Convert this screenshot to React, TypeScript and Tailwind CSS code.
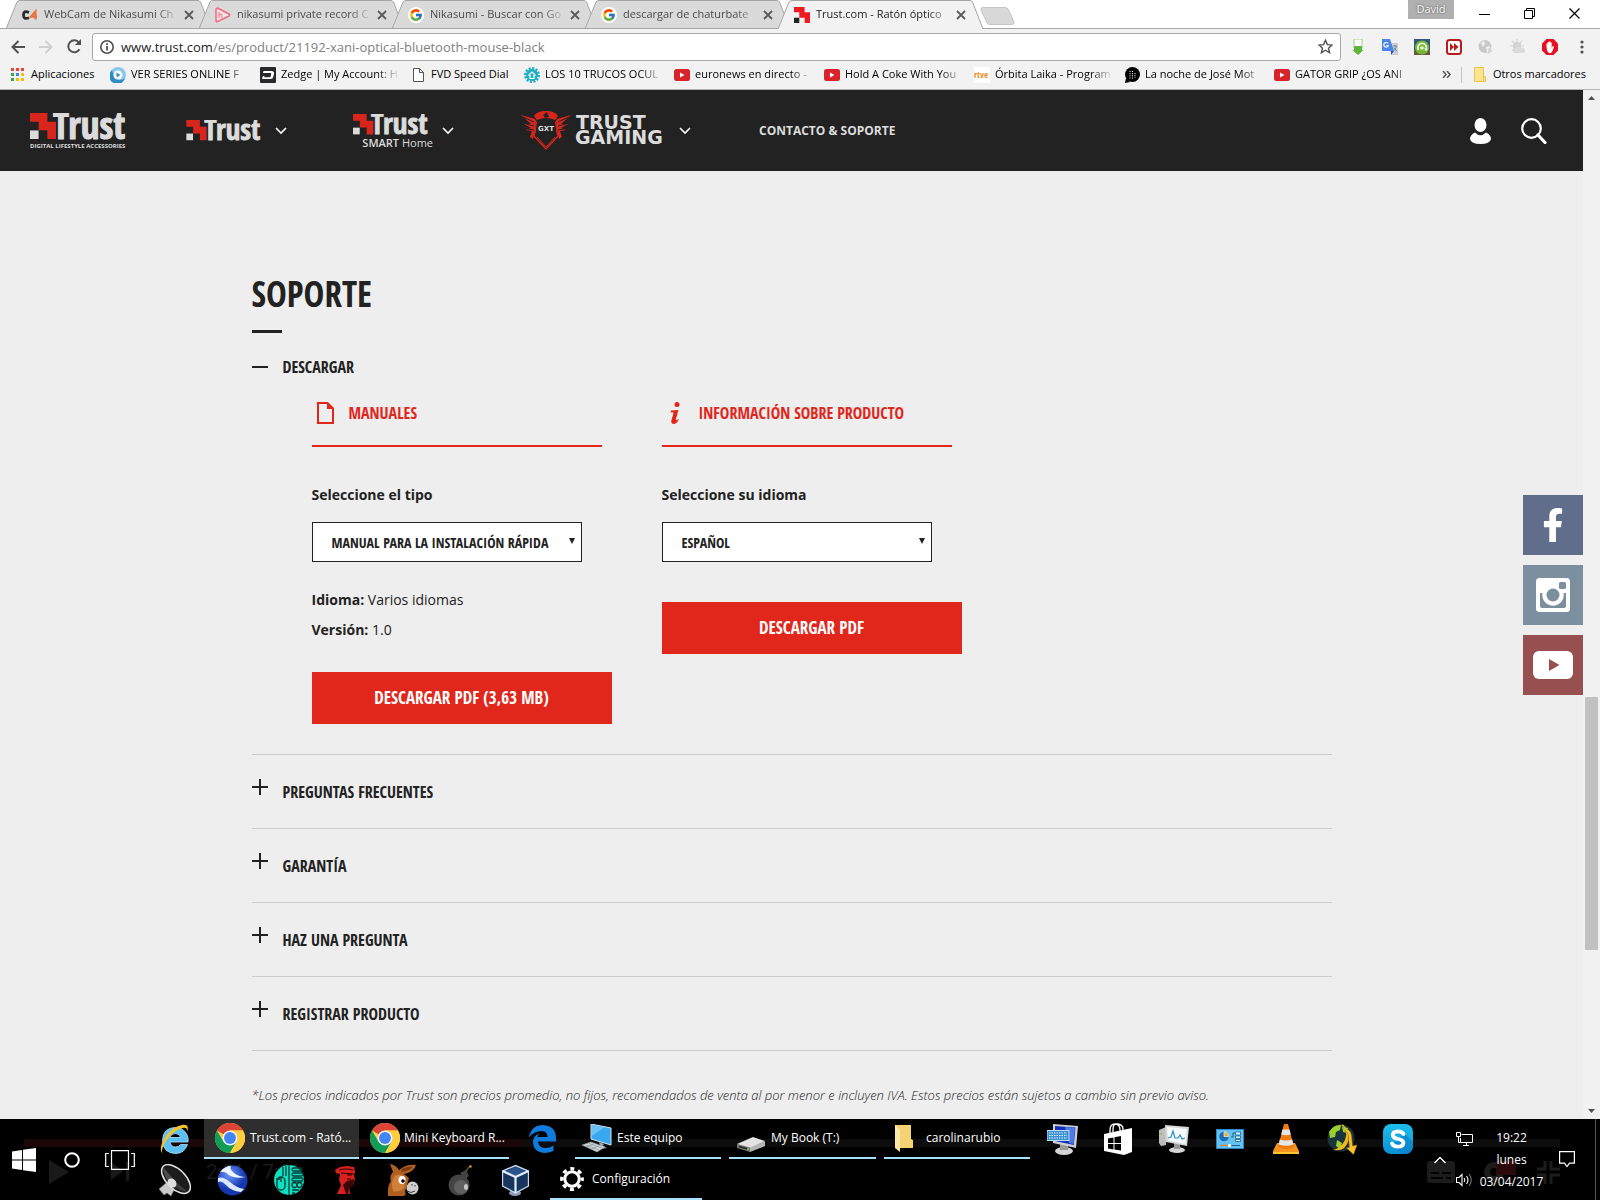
import React from "react";
import { FcGoogle } from "react-icons/fc";
import { FaFacebookF } from "react-icons/fa";

const CONDENSED = "font-['Open_Sans_Condensed','Roboto_Condensed',sans-serif] font-bold";

/* ---------- brand marks ---------- */

function TrustSteps({ light = "#dcdcdc" }: { light?: string }) {
  return (
    <>
      <path d="M0 0h17.4v8.7H26V26h-8.6v-8.7H8.7V8.7H0z" fill="#d9261c" />
      <path d="M0 17.4h8.6V26H0z" fill={light} />
    </>
  );
}

function TrustWord() {
  return (
    <text x="23" y="26" fontSize="37" fontWeight="700" fill="#dcdcdc" stroke="#dcdcdc" strokeWidth="1" fontFamily="'Open Sans Condensed', sans-serif">
      Trust
    </text>
  );
}

function TrustLogoLarge() {
  return (
    <svg width="103" height="36" viewBox="0 0 103 36" role="img" aria-label="Trust Digital Lifestyle Accessories">
      <TrustSteps />
      <TrustWord />
      <text x="0" y="35" fontSize="6" fontWeight="700" fill="#dcdcdc" fontFamily="'Open Sans', sans-serif">
        DIGITAL LIFESTYLE ACCESSORIES
      </text>
    </svg>
  );
}

function TrustLogoSmall() {
  return (
    <svg width="80" height="21" viewBox="0 0 102 27" role="img" aria-label="Trust">
      <TrustSteps />
      <TrustWord />
    </svg>
  );
}

function SmartHomeLogo() {
  return (
    <svg width="80" height="34" viewBox="0 0 80 34" role="img" aria-label="Trust Smart Home">
      <g transform="scale(0.784)">
        <TrustSteps />
        <TrustWord />
      </g>
      <text x="80" y="33" textAnchor="end" fontSize="11" fill="#dcdcdc" fontFamily="'Open Sans', sans-serif">
        <tspan fontWeight="600">SMART</tspan> Home
      </text>
    </svg>
  );
}

function GamingLogo() {
  return (
    <svg width="149" height="40" viewBox="0 0 149 40" role="img" aria-label="Trust Gaming">
      <g fill="none" stroke="#d9261c">
        <path d="M14 9 L16 13 L13 25 L25 38 L37 25 L34 13 L36 9" strokeWidth="1.4" />
        <path d="M16 26 L25 36 L34 26" strokeWidth="1" />
      </g>
      <path d="M13 5 Q16 0 25 0 Q34 0 37 5 L34 9 Q25 5 16 9z" fill="#d9261c" />
      <path d="M22 4l4-3 2 5-4 1z" fill="#222" />
      <path d="M0 4 L14 8 L15 14 L12 28 L9 26 L11 20 L5 19 L10 17 L3 13 L10 13z" fill="#d9261c" />
      <path d="M50 4 L36 8 L35 14 L38 28 L41 26 L39 20 L45 19 L40 17 L47 13 L40 13z" fill="#d9261c" />
      <path d="M2 6l11 5M5 13l8 2M7 18l6 1M48 6l-11 5M45 13l-8 2M43 18l-6 1" stroke="#222" strokeWidth="1" />
      <path d="M16 12h18l1 6-1 5H16l-1-5z" fill="#222" />
      <text x="25" y="20" textAnchor="middle" fontSize="7" fontWeight="700" fill="#dcdcdc" fontFamily="'DejaVu Sans', sans-serif">
        GXT
      </text>
      <g fill="#dcdcdc" fontFamily="'DejaVu Sans', sans-serif" fontSize="19" fontWeight="700">
        <text x="55" y="18">TRUST</text>
        <text x="54" y="33">GAMING</text>
      </g>
    </svg>
  );
}

function Chevron() {
  return (
    <svg width="12" height="8" viewBox="0 0 12 8" fill="none" stroke="#fff" strokeWidth="1.6">
      <path d="M1 1l5 5 5-5" />
    </svg>
  );
}

/* ---------- favicons (16 px) ---------- */

const svg16 = { width: 16, height: 16, viewBox: "0 0 16 16", className: "shrink-0" };

const TrustFavicon = () => (
  <svg {...svg16}>
    <path d="M0 0h10.600v5.300H16V16h-5.300v-5.300H5.300V5.300H0z" fill="#ed1c24" />
    <path d="M0 10.700h5.300V16H0z" fill="#222" />
  </svg>
);
const C4Icon = () => (
  <svg {...svg16} fill="none" strokeWidth="2.800">
    <path d="M7 5.500Q1.500 3 1.500 8T7 10.700" stroke="#2b2b2b" />
    <path d="M15 9.700H9L13.500 4.500V12.500" stroke="#e8743a" strokeWidth="2.200" />
  </svg>
);
const PlayH = () => (
  <svg {...svg16}>
    <path d="M2 1.500Q1 1 1 2.500v11q0 1.500 1.500 1l11.500-5.500q1.300-1 0-2L3 1.200z" fill="#fbe3e6" stroke="#ee6f80" strokeWidth="1.600" />
    <path d="M4 5v6M4 8q3-2 3 0v3" fill="none" stroke="#ee6f80" />
  </svg>
);
const GoogleFav = () => (
  <span className="flex size-4 shrink-0 items-center justify-center rounded-full bg-white">
    <FcGoogle size={14} />
  </span>
);
const AppsIcon = () => (
  <svg {...svg16} width="14" height="14" viewBox="0 0 14 14">
    {["#ea4335", "#ea4335", "#ea4335", "#34a853", "#4285f4", "#fbbc05", "#34a853", "#fbbc05", "#fbbc05"].map((c, i) => (
      <rect key={i} x={(i % 3) * 5} y={Math.floor(i / 3) * 5} width="3" height="3" fill={c} />
    ))}
  </svg>
);
const SeriesIcon = () => (
  <svg {...svg16}>
    <circle cx="8" cy="8" r="8" fill="#8cc8ea" />
    <path d="M2 3a8 8 0 1 0 13 8A7 7 0 0 1 4 9z" fill="#2f8dc6" />
    <circle cx="8" cy="8" r="4.500" fill="#fff" />
    <path d="M6.500 5.500v5L10.500 8z" fill="#2f8dc6" />
  </svg>
);
const ZedgeIcon = () => (
  <svg {...svg16}>
    <rect width="16" height="16" rx="1" fill="#29292d" />
    <path d="M3.500 4h8q3 0 2.500 2.500l-.6 3Q13 12 10.500 12H2l.9-3h1.600l-.3 1.200h5.300q1 0 1.200-.9l.5-2.300q.2-1-.8-1H3z" fill="#fff" />
  </svg>
);
const PageIcon = () => (
  <svg {...svg16} width="11" height="14" viewBox="0 0 11 14" fill="#fff" stroke="#555">
    <path d="M.5.5h6l4 4v9H.5zM6.500.5v4h4" />
  </svg>
);
const GearHome = () => (
  <svg {...svg16}>
    <circle cx="8" cy="8" r="6.700" fill="none" stroke="#1fafc6" strokeWidth="2.600" strokeDasharray="2.100 1.400" />
    <circle cx="8" cy="8" r="6" fill="#1fafc6" />
    <path d="M4.500 8.500L8 5l3.500 3.500M6 8v3.500h4V8" fill="none" stroke="#fff" strokeWidth="1.200" />
  </svg>
);
const YtFav = () => (
  <svg {...svg16}>
    <rect y="2" width="16" height="12" rx="2.500" fill="#d8232a" />
    <path d="M6 5.500v5L10.500 8z" fill="#fff" />
  </svg>
);
const RtveIcon = () => (
  <svg {...svg16}>
    <rect width="16" height="16" fill="#fff" />
    <text x="0" y="11" fontSize="9" fontWeight="700" fill="#f08c1e" fontFamily="'Open Sans Condensed', sans-serif">rtve</text>
  </svg>
);
const NocheIcon = () => (
  <svg {...svg16}>
    <circle cx="8.500" cy="7.500" r="7.500" fill="#000" />
    <path d="M1 16l1-5 4 4z" fill="#000" />
    <path d="M6 4v8M8.500 4v8M11 6v5" stroke="#fff" strokeWidth="1" strokeDasharray="1 1.200" />
  </svg>
);
const FolderFav = () => (
  <svg {...svg16} width="12" height="15" viewBox="0 0 12 15">
    <path d="M.5.5h9v9h2v5H.5z" fill="#ffe58f" stroke="#e8c14f" />
    <path d="M9.500 9.500v5" stroke="#e8c14f" />
  </svg>
);

/* ---------- browser chrome ---------- */

type TabProps = { icon: React.ReactNode; title: string; active?: boolean };

function BrowserTab({ icon, title, active }: TabProps) {
  const fill = active ? "#f2f2f2" : "#dadada";
  return (
    <div className={active ? "relative z-10 -mr-3 h-[29px] w-[205px]" : "relative -mr-3 h-[29px] w-[205px]"}>
      <svg className="absolute inset-0 h-full w-full" viewBox="0 0 205 29" preserveAspectRatio="none">
        <path d="M0 29L11 2Q12 .5 14 .5H192Q193.500.5 194.500 2L205 29" fill={fill} stroke="#a6a6a6" />
        {!active && <path d="M0 28.500h205" stroke="#a6a6a6" />}
      </svg>
      <div className="relative flex h-full items-center pl-4">
        {icon}
        <button
          className={`ml-[6px] w-[134px] text-left text-[11px] whitespace-nowrap [mask-image:linear-gradient(to_right,#000_112px,transparent_136px)] ${active ? "text-[#222]" : "text-[#4a4a4a]"}`}
        >
          {title}
        </button>
        <button aria-label="Cerrar pestaña" className="mr-[17px] ml-auto">
          <svg width="10" height="10" viewBox="0 0 10 10" stroke="#5a5a5a" strokeWidth="1.800">
            <path d="M1 1l8 8M9 1L1 9" />
          </svg>
        </button>
      </div>
    </div>
  );
}

function TabStrip() {
  return (
    <div className="flex h-[29px] items-start border-b border-[#a6a6a6] bg-white">
      <div className="flex pl-[6px]">
        <BrowserTab icon={<C4Icon />} title="WebCam de Nikasumi Ch" />
        <BrowserTab icon={<PlayH />} title="nikasumi private record C" />
        <BrowserTab icon={<GoogleFav />} title="Nikasumi - Buscar con Go" />
        <BrowserTab icon={<GoogleFav />} title="descargar de chaturbate" />
        <BrowserTab icon={<TrustFavicon />} title="Trust.com - Ratón óptico" active />
      </div>
      <button aria-label="Nueva pestaña" className="mt-[7px] ml-[9px]">
        <svg width="35" height="18" viewBox="0 0 35 18">
          <path d="M3 .5H25Q27 .5 28 2L34 15Q34.500 17.500 32 17.500H10Q8 17.500 7 16L1 3Q.5.5 3 .5z" fill="#d8d8d8" stroke="#c6c6c6" />
        </svg>
      </button>
      <div className="ml-auto flex items-start">
        <button className="mr-1 flex h-[19px] w-[46px] items-start justify-center bg-[#b0b0b0] text-[11px] leading-[17px] text-white [text-shadow:0_0_2px_#333]">David</button>
        <button aria-label="Minimizar" className="flex h-[27px] w-[52px] items-center justify-center">
          <svg width="11" height="10" stroke="#000"><path d="M0 5.500h11" /></svg>
        </button>
        <button aria-label="Restaurar" className="flex h-[27px] w-[38px] items-center justify-center">
          <svg width="11" height="11" fill="none" stroke="#000"><path d="M.5 2.500h8v8h-8zM2.500 2V.5h8v8H9" /></svg>
        </button>
        <button aria-label="Cerrar" className="flex h-[27px] w-[52px] items-center justify-center">
          <svg width="11" height="11" stroke="#000" strokeWidth="1.200"><path d="M.5.5l10 10M10.500.5l-10 10" /></svg>
        </button>
      </div>
    </div>
  );
}

const extensions: { name: string; art: React.ReactNode }[] = [
  { name: "Descargas", art: (<><path d="M4 0h8v9H4z" fill="#fff" stroke="#9bd27f" /><path d="M4 7h8v4h1.500L8 16l-5.500-5H4z" fill="#5fb53a" /></>) },
  { name: "Traductor", art: (<><path d="M6 4h10v12H9z" fill="#cfcfcf" /><path d="M0 0h8l4 12H1Q0 12 0 11z" fill="#4a86e8" /><path d="M9 12h3l-3 4z" fill="#2a56c6" /><path d="M6 4.500A2.300 2.300 0 1 0 6.300 6.500H4.500" fill="none" stroke="#fff" strokeWidth="1.200" /><path d="M11 7h4M13 6v1M14.500 7q-1 4-3 5M12 8.500q1 2.500 3 3.500" stroke="#5a7a9a" fill="none" strokeWidth=".8" /></>) },
  { name: "Recargar", art: (<><rect width="16" height="16" fill="#35577d" /><rect y="11" width="16" height="5" fill="#6a5a3a" /><circle cx="8" cy="8.500" r="7" fill="#74b737" /><path d="M4.500 11A4.300 4.300 0 1 1 12 10.500" fill="none" stroke="#e6f5d8" strokeWidth="1.800" /><path d="M10 9.500h4l-2 3z" fill="#e6f5d8" /><circle cx="8" cy="9" r="1.800" fill="#e6f5d8" /></>) },
  { name: "FVD", art: (<><rect x="1" y="1" width="14" height="14" rx="2.500" fill="#fff" stroke="#b81c1c" strokeWidth="2" /><path d="M4 4l4 4-4 4zM8 4l4.500 4L8 12z" fill="#b81c1c" /></>) },
  { name: "Mundo", art: (<><circle cx="7" cy="7.500" r="6.500" fill="#c9c9c9" /><path d="M3 4l3-2 1 3-2 3zM8 8l4-1-1 5-2 1z" fill="#f0f0f0" /><path d="M10 9l5 3-5 3z" fill="#d6d6d6" /></>) },
  { name: "Tiempo", art: (<><circle cx="7" cy="7" r="4" fill="#cfcfcf" /><path d="M7 0v14M0 7h14M2 2l10 10M12 2L2 12" stroke="#d4d4d4" strokeWidth="1.200" /><path d="M4 14a3 3 0 0 1 1-5 4 4 0 0 1 7 0 2.500 2.500 0 0 1 1 5z" fill="#dadada" /></>) },
  { name: "Bloqueador", art: (<><path d="M4.500 0h7L16 4.500v7L11.500 16h-7L0 11.500v-7z" fill="#e81123" /><path d="M4.500 8V4.500h1.300V8V3h1.300v5V2.500h1.300V8V3.500h1.300V9l1-2 1.300.5L10.500 12 9 14H7Q4.500 12 4.500 8z" fill="#fff" /></>) },
];

function Toolbar() {
  return (
    <div className="flex h-[34px] items-center bg-[#f2f2f2] pt-px pr-[10px] pl-[11px]">
      <button aria-label="Atrás" className="w-7">
        <svg width="14" height="14" viewBox="0 0 14 14" fill="none" stroke="#505050" strokeWidth="2"><path d="M7.500 1L1.500 7l6 6M1.500 7H14" /></svg>
      </button>
      <button aria-label="Adelante" className="w-7">
        <svg width="14" height="14" viewBox="0 0 14 14" fill="none" stroke="#d0d0d0" strokeWidth="2"><path d="M6.500 1l6 6-6 6M12.500 7H0" /></svg>
      </button>
      <button aria-label="Recargar" className="w-[25px]">
        <svg width="15" height="15" viewBox="0 0 15 15" fill="none" stroke="#505050" strokeWidth="2"><path d="M12.500 10.300A6 6 0 1 1 12 3.500" /><path d="M14 0v6H8z" fill="#505050" stroke="none" /></svg>
      </button>
      <div className="flex h-7 flex-1 items-center rounded-[3px] border border-[#a9a9a9] bg-white px-[7px]">
        <svg width="14" height="14" viewBox="0 0 14 14" fill="none" stroke="#505050" strokeWidth="1.600" className="shrink-0">
          <circle cx="7" cy="7" r="6.200" /><path d="M7 6v4.500M7 3.300v1.600" strokeWidth="1.800" />
        </svg>
        <a href="#url" className="ml-[7px] flex-1 text-[13px] leading-5 whitespace-nowrap text-[#222]">
          www.trust.com<span className="text-[#808080]">/es/product/21192-xani-optical-bluetooth-mouse-black</span>
        </a>
        <button aria-label="Añadir a marcadores">
          <svg width="15" height="15" viewBox="0 0 24 24" fill="none" stroke="#505050" strokeWidth="2.200"><path d="M12 2l3 7 7.500.6-5.700 5 1.800 7.400-6.600-4-6.600 4 1.800-7.400-5.700-5L9 9z" /></svg>
        </button>
      </div>
      <div className="ml-[9px] flex items-center gap-4">
        {extensions.map((e) => (
          <button key={e.name} aria-label={e.name}>
            <svg {...svg16}>{e.art}</svg>
          </button>
        ))}
        <button aria-label="Menú" className="flex w-4 justify-center">
          <svg width="4" height="16" fill="#505050"><circle cx="2" cy="3" r="1.600" /><circle cx="2" cy="8" r="1.600" /><circle cx="2" cy="13" r="1.600" /></svg>
        </button>
      </div>
    </div>
  );
}

function Bookmark({ icon, label }: { icon: React.ReactNode; label: string }) {
  return (
    <a href="#marcador" className="flex w-[137px] shrink-0 items-center gap-[5px]">
      {icon}
      <span className="flex-1 whitespace-nowrap [mask-image:linear-gradient(to_right,#000_96px,transparent_118px)]">{label}</span>
    </a>
  );
}

function BookmarksBar() {
  return (
    <div className="flex h-[27px] items-center gap-[13px] border-b border-[#b4b4b4] bg-[#f2f2f2] pr-[14px] pb-[3px] pl-[11px] text-[11px] text-black">
      <a href="#apps" className="flex w-[86px] shrink-0 items-center gap-[6px] whitespace-nowrap"><AppsIcon />Aplicaciones</a>
      <Bookmark icon={<SeriesIcon />} label="VER SERIES ONLINE F" />
      <Bookmark icon={<ZedgeIcon />} label="Zedge | My Account: H" />
      <a href="#fvd" className="flex w-[101px] shrink-0 items-center gap-[7px] pl-[3px] whitespace-nowrap"><PageIcon />FVD Speed Dial</a>
      <Bookmark icon={<GearHome />} label="LOS 10 TRUCOS OCUL" />
      <Bookmark icon={<YtFav />} label="euronews en directo -" />
      <Bookmark icon={<YtFav />} label="Hold A Coke With You" />
      <Bookmark icon={<RtveIcon />} label="Órbita Laika - Program" />
      <Bookmark icon={<NocheIcon />} label="La noche de José Mot" />
      <Bookmark icon={<YtFav />} label="GATOR GRIP ¿OS ANI" />
      <div className="ml-auto flex shrink-0 items-center">
        <button aria-label="Más marcadores" className="mr-[10px]">
          <svg width="9" height="7" fill="none" stroke="#555" strokeWidth="1.500"><path d="M1 0l3 3.500L1 7M5 0l3 3.500L5 7" /></svg>
        </button>
        <span className="mr-3 h-4 w-px bg-[#c4c4c4]" />
        <a href="#otros" className="flex items-center gap-[7px] whitespace-nowrap"><FolderFav />Otros marcadores</a>
      </div>
    </div>
  );
}

/* ---------- site ---------- */

function SiteHeader() {
  return (
    <header className="flex h-[81px] items-center bg-[#222] pr-9 pl-[30px]">
      <a href="#inicio" className="mr-[53px]"><TrustLogoLarge /></a>
      <button className="mr-[66px] flex items-center gap-[9px]"><TrustLogoSmall /><Chevron /></button>
      <button className="mr-[67px] flex items-center gap-[9px]"><SmartHomeLogo /><Chevron /></button>
      <button className="mr-[68px] flex items-center gap-[9px]"><GamingLogo /><Chevron /></button>
      <a href="#contacto" className="text-[12px] font-bold whitespace-nowrap text-[#dcdcdc]">CONTACTO &amp; SOPORTE</a>
      <div className="ml-auto flex items-center gap-[30px]">
        <button aria-label="Mi cuenta">
          <svg width="21" height="26" viewBox="0 0 21 26" fill="#fff">
            <ellipse cx="10.500" cy="7" rx="6" ry="7" />
            <path d="M5 14.500Q10.500 20 16 14.500Q21 17 21 21Q20 26 10.500 26Q1 26 0 21Q0 17 5 14.500z" />
          </svg>
        </button>
        <button aria-label="Buscar">
          <svg width="26" height="26" viewBox="0 0 26 26" fill="none" stroke="#fff">
            <circle cx="10.500" cy="10.500" r="9.300" strokeWidth="2.200" /><path d="M17 17l7 7.500" strokeWidth="3.200" strokeLinecap="round" />
          </svg>
        </button>
      </div>
    </header>
  );
}

type SelectProps = { id: string; label: string; options: string[] };

function SelectField({ id, label, options }: SelectProps) {
  return (
    <div>
      <label htmlFor={id} className="block pt-[38px] text-[14px] leading-5 font-bold text-[#222]">{label}</label>
      <div className="relative mt-[17px] mr-5 h-10">
        <select id={id} className={`${CONDENSED} h-full w-full appearance-none border border-[#222] bg-white pl-[19px] text-[14px] text-[#222]`}>
          {options.map((o) => <option key={o}>{o}</option>)}
        </select>
        <svg width="6" height="7" viewBox="0 0 6 7" className="pointer-events-none absolute top-4 right-[7px]" fill="#222"><path d="M0 0h6L3 6z" /></svg>
      </div>
    </div>
  );
}

function Column({ icon, title, children }: { icon: React.ReactNode; title: string; children: React.ReactNode }) {
  return (
    <section className="w-[290px]">
      <h3 className={`${CONDENSED} flex h-12 items-start border-b-2 border-[#e1261c] pt-[2px] text-[16px] leading-6 text-[#e1261c]`}>
        <span className="flex h-6 w-[37px] shrink-0 items-center pl-[5px]">{icon}</span>
        {title}
      </h3>
      {children}
    </section>
  );
}

function DownloadButton({ children }: { children: React.ReactNode }) {
  return (
    <button className={`${CONDENSED} block h-[52px] w-[300px] bg-[#e1261c] text-[17px] text-white`}>{children}</button>
  );
}

function DownloadPanel() {
  return (
    <div className="flex gap-[60px] pt-5 pb-[30px] pl-[60px]">
      <Column
        title="MANUALES"
        icon={<svg width="17" height="22" viewBox="0 0 17 22"><path d="M1 1h9.500L16 6.500V21H1z" fill="none" stroke="#e1261c" strokeWidth="2" /><path d="M10 1v6h6z" fill="#e1261c" /></svg>}
      >
        <SelectField id="tipo" label="Seleccione el tipo" options={["MANUAL PARA LA INSTALACIÓN RÁPIDA"]} />
        <dl className="mt-[23px] mb-[27px] text-[14px] leading-[30px] text-[#222]">
          <div><dt className="inline font-bold">Idioma:</dt> <dd className="inline">Varios idiomas</dd></div>
          <div><dt className="inline font-bold">Versión:</dt> <dd className="inline">1.0</dd></div>
        </dl>
        <DownloadButton>DESCARGAR PDF (3,63 MB)</DownloadButton>
      </Column>
      <Column
        title="INFORMACIÓN SOBRE PRODUCTO"
        icon={<svg width="17" height="22" viewBox="0 0 17 22" fill="#e1261c" className="ml-[3px]"><circle cx="7" cy="2.500" r="2.500" /><path d="M1 8.500L8.500 8 5.800 17.500Q5.800 19 9 17Q7 22 3.500 22Q.5 21.500 1.500 18L3.500 11Q3.500 10 .5 10.500z" /></svg>}
      >
        <SelectField id="idioma" label="Seleccione su idioma" options={["ESPAÑOL"]} />
        <div className="h-10" />
        <DownloadButton>DESCARGAR PDF</DownloadButton>
      </Column>
    </div>
  );
}

const sections = ["PREGUNTAS FRECUENTES", "GARANTÍA", "HAZ UNA PREGUNTA", "REGISTRAR PRODUCTO"];

function SupportPage() {
  return (
    <main className="mx-auto w-full max-w-[1080px] pt-[96px] text-[#222]">
      <h1 className={`${CONDENSED} text-[35px] leading-[54px]`}>SOPORTE</h1>
      <div className="mt-[9px] h-[3px] w-[30px] bg-[#222]" />
      <h2>
        <button aria-expanded="true" className={`${CONDENSED} mt-[22px] flex items-center gap-[15px] text-[16px] leading-6`}>
          <span className="h-[2px] w-4 bg-[#222]" />DESCARGAR
        </button>
      </h2>
      <DownloadPanel />
      {sections.map((s) => (
        <h2 key={s} className="border-t border-[#ccc]">
          <button aria-expanded="false" className={`${CONDENSED} flex h-[73px] w-full items-center gap-[15px] text-[16px] leading-6`}>
            <svg width="16" height="16" stroke="#222" strokeWidth="2" className="mb-[10px]"><path d="M0 8h16M8 0v16" /></svg>
            {s}
          </button>
        </h2>
      ))}
      <p className="border-t border-[#ccc] pt-[34px] text-[13px] leading-5 font-light whitespace-nowrap italic">
        *Los precios indicados por Trust son precios promedio, no fijos, recomendados de venta al por menor e incluyen IVA. Estos precios están sujetos a cambio sin previo aviso.
      </p>
    </main>
  );
}

function SocialBar() {
  return (
    <nav aria-label="Redes sociales" className="absolute top-[405px] right-0 flex flex-col gap-[10px]">
      <a href="#facebook" aria-label="Facebook" className="flex size-[60px] items-center justify-center bg-[#616e8b] text-white"><FaFacebookF size={34} /></a>
      <a href="#instagram" aria-label="Instagram" className="flex size-[60px] items-center justify-center bg-[#7b8f9e]">
        <svg width="34" height="34" viewBox="0 0 34 34">
          <rect width="34" height="34" rx="3.500" fill="#fff" />
          <path d="M4 15h5a8.800 8.800 0 1 0 16.500 0H30v13q0 2-2 2H6q-2 0-2-2z" fill="#7b8f9e" />
          <circle cx="17" cy="17" r="8.500" fill="none" stroke="#fff" strokeWidth="4.500" />
          <circle cx="17" cy="17" r="6.500" fill="#7b8f9e" />
          <rect x="23" y="4" width="7" height="7" rx="1.500" fill="#7b8f9e" />
        </svg>
      </a>
      <a href="#youtube" aria-label="YouTube" className="flex size-[60px] items-center justify-center bg-[#984f50]">
        <svg width="40" height="28" viewBox="0 0 40 28"><rect width="40" height="28" rx="6" fill="#fff" /><path d="M16 8l10.500 6L16 20z" fill="#984f50" /></svg>
      </a>
    </nav>
  );
}

function Scrollbar() {
  return (
    <div className="flex w-[17px] shrink-0 flex-col items-center justify-between bg-[#f1f1f1] py-[6px]">
      <svg width="7" height="4" fill="#505050"><path d="M0 4l3.500-4L7 4z" /></svg>
      <div className="flex w-[13px] flex-1 flex-col">
        <div className="flex-[597]" />
        <div className="flex-[253] bg-[#c1c1c1]" />
        <div className="flex-[159]" />
      </div>
      <svg width="7" height="4" fill="#505050"><path d="M0 0l3.500 4L7 0z" /></svg>
    </div>
  );
}

/* ---------- taskbar ---------- */

const ChromeIcon = () => (
  <svg width="30" height="30" viewBox="0 0 48 48" className="shrink-0">
    <circle cx="24" cy="24" r="24" fill="#ffcd40" />
    <path d="M24 24L3.200 12A24 24 0 0 1 44.800 12H24z" fill="#db4437" />
    <path d="M3.200 12A24 24 0 0 0 24 48L34.400 30 24 34 13.600 30z" fill="#0f9d58" />
    <path d="M44.800 12H24v12l10.400 6L24 48A24 24 0 0 0 44.800 12z" fill="#ffcd40" />
    <circle cx="24" cy="24" r="12" fill="#f1f1f1" />
    <circle cx="24" cy="24" r="9.500" fill="#4285f4" />
  </svg>
);

const EdgeIcon = () => (
  <svg width="27" height="28" viewBox="0 0 27 28" className="shrink-0">
    <path d="M0 12.500Q2 0 14 0Q27 1 27 13v3.500H9Q9.500 22.500 16 23Q21 23 24.500 20.500V26Q20 28 15 28Q4.500 27 4 17.500Q4 11 10 8.500Q8.500 10.500 8.500 12H18.500Q18.500 6 12.500 6Q5 6 0 12.500z" fill="#0f7bdc" />
  </svg>
);

const IeIcon = () => (
  <svg width="30" height="31" viewBox="0 0 30 31">
    <path d="M15 3.500A12.500 12.500 0 0 1 28 18H10Q11 23 15.500 23Q19 23 20.500 20.500H27.500Q24.500 29.500 15.500 29.500Q3 29 2.500 16.500Q3 4 15 3.500zM10 13.500H20.500Q19.500 9.500 15.300 9.500Q11 9.500 10 13.500z" fill="#5bc0f5" stroke="#a9e2ff" strokeWidth=".8" />
    <path d="M3 30Q-2 26 4.500 14Q12 2.500 23 .8Q30 .5 27 8Q28 3 22.500 4Q12 7 6 17Q0 27 3 30z" fill="#f6c32b" />
  </svg>
);

const PcIcon = () => (
  <svg width="30" height="29" viewBox="0 0 30 29">
    <path d="M9 0l20 4v17L9 15z" fill="#38a9f0" stroke="#d8e6ee" />
    <path d="M10 1l12 2.500L10 12z" fill="#7fcbf8" opacity=".7" />
    <path d="M17 18l5 2-1 2 4 2-6 1z" fill="#9aa4ab" />
    <path d="M0 21l9-3 14 5-8 5z" fill="#cfd5d9" stroke="#8b9399" strokeWidth=".6" />
    <path d="M4 21l13 5M7 19.500l13 4.500M4 23l8-3M9 25l8-3" stroke="#8b9399" strokeWidth=".7" />
  </svg>
);

const DriveIcon = () => (
  <svg width="28" height="15" viewBox="0 0 28 15">
    <path d="M0 7L16 0l12 4-15 8z" fill="#e3e3e3" /><path d="M0 7l13 3.500V15L0 11z" fill="#777" /><path d="M13 10.500L28 4v5l-15 6z" fill="#b5b5b5" />
    <path d="M2 9.500l8 2.300" stroke="#222" strokeWidth="1.500" /><circle cx="11" cy="12.300" r="1" fill="#6d3" />
  </svg>
);

const FolderIcon = () => (
  <svg width="18" height="27" viewBox="0 0 18 27">
    <path d="M0 0h16v14l2 1v8H0z" fill="#f6d372" /><path d="M0 0l5 5v22l-5-4z" fill="#ffe9a6" />
  </svg>
);

const KeyboardMonitor = () => (
  <svg width="31" height="31" viewBox="0 0 31 31">
    <ellipse cx="17" cy="27" rx="9" ry="4" fill="#d4d4d4" /><path d="M13 19h8v7h-8z" fill="#999" />
    <path d="M6 0l25 2-2 22L6 19z" fill="#cfcfcf" /><path d="M8 2l20.500 1.500-1.700 17.500L8 17z" fill="#1230b8" /><path d="M18 3l10 .8L26.500 20 22 19z" fill="#4a7be8" />
    <rect x="0" y="6.500" width="22" height="10" fill="#3d8fd4" stroke="#bfe0f6" /><path d="M2 9h18M2 11.500h18M2 14h18" stroke="#e8f4fc" strokeDasharray="1.500 1" />
  </svg>
);

const StoreIcon = () => (
  <svg width="28" height="32" viewBox="0 0 28 32">
    <path d="M6 10V7Q6 1 11 1Q16 1 16 7v2M9 9V6Q9 0 14 1Q19 2 19 6v2" fill="none" stroke="#fff" strokeWidth="1.300" />
    <path d="M0 11l28-6v24l-8 3-20-4z" fill="#fff" />
    <path d="M4 15.500l5.500-1v5.500H4zM10.500 14.300l6.500-1.200V20h-6.500zM4 21h5.500v5.500l-5.500-1zM10.500 21H17v6.500l-6.500-1z" fill="#000" />
  </svg>
);

const MonitorIcon = () => (
  <svg width="30" height="28" viewBox="0 0 30 28">
    <path d="M0 5l7-3v18l-5 1-2-3z" fill="#bdbdbd" /><circle cx="2" cy="9" r="1" fill="#6d3" />
    <ellipse cx="18" cy="25" rx="8" ry="3" fill="#d4d4d4" /><path d="M15 18h6v6h-6z" fill="#999" />
    <path d="M6 0l24 2-2 19L7 17z" fill="#d8d8d8" /><path d="M8 2l20 2-1.500 15L9 15.500z" fill="#f4fafd" />
    <path d="M9 13l3-1 2-6 2 7 3 0 2-3 2 4 3-1" fill="none" stroke="#2c8fc4" strokeWidth="1.200" />
  </svg>
);

const ControlPanel = () => (
  <svg width="28" height="20" viewBox="0 0 28 20">
    <rect x=".5" y=".5" width="27" height="19" fill="#63c2f0" stroke="#2d88c8" />
    <circle cx="8" cy="7.500" r="4.800" fill="#1b6fb4" /><path d="M8 7.500V2.700A4.800 4.800 0 0 1 12.800 7.500z" fill="#f0a83a" stroke="#fff" strokeWidth=".6" />
    <path d="M15 8h2V4h2" fill="none" stroke="#1b5f94" /><path d="M19.500 3h5v3h-5zM19.500 7h5v2.500h-5zM19.500 10.500h5v2h-5z" fill="#e2f4fd" stroke="#1b5f94" strokeWidth=".8" />
    <path d="M4 16.500h9" stroke="#e0802a" strokeWidth="1.300" /><path d="M13 16.500h11" stroke="#1b5f94" /><circle cx="13.500" cy="16.500" r="1.600" fill="#fff" />
  </svg>
);

const VlcIcon = () => (
  <svg width="26" height="30" viewBox="0 0 26 30">
    <path d="M4 19h18l4 8v3H0v-3z" fill="#f5951f" /><path d="M0 28h26v2H0z" fill="#ffc12e" />
    <path d="M11 0h4l6 23q-8 4-16 0z" fill="#ee7a10" />
    <path d="M9.500 5.500h7l1.300 5q-5 1.500-9.600 0zM6.800 15.500q6 2 12.400 0l1.200 5q-7 2.500-14.800 0z" fill="#e6e6e6" />
  </svg>
);

const DownloaderIcon = () => (
  <svg width="30" height="31" viewBox="0 0 30 31">
    <circle cx="14" cy="14" r="13.500" fill="#19343c" /><path d="M2 8Q7 0 14 1l-1 5-4 2-1 5-5 1zM15 3l6 1-1 5-4-1zM10 16l5 3-2 6-4-3z" fill="#9bcf2e" />
    <path d="M14 1Q22 6 18 16Q14 24 6 26Q19 28 21.500 16Q22 6 16 .5z" fill="#f4b61d" /><path d="M20 5q4 2 4.500 7l1 10 4.500-1-3.500 9.500-7-6.500 3-.6-1-10q-.3-5-3-7z" fill="#f8c22d" stroke="#a87205" strokeWidth=".5" />
  </svg>
);

const SkypeIcon = () => (
  <svg width="30" height="30" viewBox="0 0 30 30">
    <defs><linearGradient id="sk" x1="0" y1="0" x2="0" y2="1"><stop offset="0" stopColor="#1cc0ea" /><stop offset="1" stopColor="#0a8fd6" /></linearGradient></defs>
    <rect width="30" height="30" rx="8" fill="url(#sk)" /><path d="M21 9l9 9v5q-1 6-6 7h-5l-9-9z" fill="#0a7fc4" opacity=".6" />
    <path d="M20.500 10Q19 7.300 15 7.300Q9.800 7.500 9.800 11Q10 14 15 15Q20.400 16 20.400 19Q20 22.700 15 22.700Q10.500 22.700 9 19.500" fill="none" stroke="#fff" strokeWidth="3.800" strokeLinecap="round" />
  </svg>
);

const SpeakerIcon = () => (
  <svg width="32" height="32" viewBox="0 0 32 32">
    <path d="M0 25l7-6 8 7-3 6-4-3-3 2z" fill="#c9c9c9" stroke="#777" strokeWidth=".6" />
    <ellipse cx="17" cy="15" rx="9.500" ry="18" transform="rotate(-45 17 15)" fill="#1c1c1c" stroke="#e4e4e4" strokeWidth="1.500" />
    <path d="M4 3Q5 14 12 21l5-3z" fill="#4c4c4c" />
    <path d="M17 18l12 10q-9-1-15-7z" fill="#3a3a3a" />
    <ellipse cx="13" cy="19" rx="4" ry="5" transform="rotate(-42 13 19)" fill="#dedede" />
  </svg>
);

const EarthIcon = () => (
  <svg width="31" height="31" viewBox="0 0 31 31">
    <defs><radialGradient id="ge" cx=".4" cy=".3"><stop offset="0" stopColor="#6f9bff" /><stop offset="1" stopColor="#1638ae" /></radialGradient></defs>
    <circle cx="15.500" cy="15.500" r="15" fill="url(#ge)" />
    <path d="M3 7Q8 1 14 .8Q12 4 17 8Q22 12 29 12Q18 14 12 10Q8 6 3 7z" fill="#f0f6ff" /><path d="M1 13Q6 11 13 17Q20 23 27 24L24 27Q14 26 9 20Q5 15 1 17z" fill="#dce8ff" />
  </svg>
);

const TealIcon = () => (
  <svg width="30" height="30" viewBox="0 0 30 30">
    <circle cx="15" cy="15" r="15" fill="#0ee0c2" />
    <g fill="none" stroke="#063a34" strokeWidth="1.300">
      <path d="M15 0v30M2 14h4M9 2v9M12 1v10" /><rect x="3" y="12" width="8" height="13" rx="4" /><path d="M7 12v5" />
      <rect x="18" y="3" width="10" height="3" rx="1.500" /><rect x="18" y="8" width="11" height="3" rx="1.500" /><rect x="18" y="13" width="11" height="3" rx="1.500" /><circle cx="20.500" cy="20" r="2.500" /><circle cx="25.500" cy="20" r="2.500" /><path d="M18 25h7M18 28h3" />
    </g>
  </svg>
);

const RedHead = () => (
  <svg width="21" height="28" viewBox="0 0 21 28">
    <path d="M0 4L5 1 12 0l7 1 1 5-1 4 1 3-2 6-4 1 1 8H2l4-9-2-5 1-6-4-1z" fill="#d9201f" />
    <path d="M12 15l7-2-1 7-4 2-1 6h-2l-3-9z" fill="#3a0808" />
    <path d="M4 4q7-2 14 0M6 7l13 1M12 9l5 0M12 13l4 0" fill="none" stroke="#2a0505" strokeWidth="1.100" />
  </svg>
);

const DonkeyIcon = () => (
  <svg width="32" height="32" viewBox="0 0 32 32">
    <path d="M1 32Q0 22 4 17Q2 12 6 8L3 0Q9 1 12 6Q19 0 29 1Q27 8 17 10L22 14 18 28Q20 31 16 32z" fill="#b05f20" />
    <path d="M6 27Q3 16 9 11Q15 9 19 14L17 24Q12 29 6 27z" fill="#d08038" />
    <path d="M14 5Q20 2 26 2.500Q22 7 15 8z" fill="#7a3c12" />
    <ellipse cx="25.500" cy="24" rx="6" ry="6.500" fill="#cfcfcf" /><ellipse cx="15" cy="16" rx="3.500" ry="4" fill="#fff" /><circle cx="16" cy="17" r="1.800" /><path d="M20 27q4 3 8 0" fill="none" stroke="#333" /><path d="M25 20v1.500M28 21v1.500" stroke="#333" />
  </svg>
);

const BombIcon = () => (
  <svg width="24" height="31" viewBox="0 0 24 31">
    <circle cx="11" cy="20" r="10.500" fill="#444" /><circle cx="13" cy="22" r="7" fill="#606060" /><ellipse cx="18" cy="22" rx="2" ry="3" fill="#c8c8c8" />
    <path d="M12 8l6-3 3 6-4 3z" fill="#444" /><path d="M18 6l4-5" stroke="#8a6a30" strokeWidth="1.200" /><circle cx="22.500" cy="1.500" r="1.200" fill="#d9a032" />
  </svg>
);

const VboxIcon = () => (
  <svg width="27" height="31" viewBox="0 0 27 31">
    <ellipse cx="13" cy="28" rx="6" ry="3" fill="#8d9cb5" />
    <path d="M13.500.5L26.500 6v15L13.500 28 .5 21V6z" fill="#17355f" stroke="#c7d8f0" strokeWidth="1.400" />
    <path d="M13.500 2L24 6.500 13.500 11 3 6.500z" fill="#2b548d" /><path d="M.5 6l13 6 13-6M13.500 12v16" fill="none" stroke="#e4eefb" strokeWidth="2.200" />
  </svg>
);

const SettingsGear = () => (
  <svg width="24" height="24" viewBox="0 0 24 24" fill="none" stroke="#fff">
    <circle cx="12" cy="12" r="7.200" strokeWidth="3" /><circle cx="12" cy="12" r="10.200" strokeWidth="3.400" strokeDasharray="4 4.010" strokeDashoffset="2" />
  </svg>
);

type TaskProps = { icon: React.ReactNode; label: string; className: string };

function Task({ icon, label, className }: TaskProps) {
  return (
    <button className={`flex h-10 shrink-0 items-center border-b-2 border-[#a6e0fa] whitespace-nowrap text-white ${className}`}>
      {icon}
      {label}
    </button>
  );
}

function Launcher({ name, icon, className }: { name: string; icon: React.ReactNode; className: string }) {
  return <button aria-label={name} className={`flex h-10 shrink-0 items-center justify-center ${className}`}>{icon}</button>;
}

function PlayerGhost() {
  return (
    <div aria-hidden="true" className="pointer-events-none absolute inset-0">
      <div className="absolute top-5 right-[40px] left-6 h-2 bg-[linear-gradient(to_right,#1c0708_500px,#0d0d0d_500px)]" />
      <svg className="absolute top-10 left-12" width="84" height="28" fill="#191919"><path d="M1 1l20 12L1 25zM63 3l12 9-12 9zM78 3h3v19h-3z" /></svg>
      <span className="absolute top-[38px] left-[206px] font-[Roboto] text-[20px] text-[#1a1a1a]">2:01 / 7:21</span>
      <svg className="absolute top-[42px] left-[1427px]" width="136" height="26">
        <rect width="28" height="22" rx="3" fill="#1c1c1c" /><path d="M4 12h8M15 12h9M4 17h12M19 17h5" stroke="#000" strokeWidth="2" />
        <circle cx="67" cy="11" r="7" fill="none" stroke="#1c1c1c" strokeWidth="6" /><rect x="69" y="0" width="20" height="14" fill="#2b0a0b" />
        <path d="M110 8h8V0M124 0v8h9M110 14h8v9M133 14h-9v9" fill="none" stroke="#1c1c1c" strokeWidth="3" />
      </svg>
    </div>
  );
}

function Taskbar() {
  return (
    <footer className="relative flex h-[81px] shrink-0 bg-black text-[12px] text-white">
      <PlayerGhost />
      <div className="relative flex w-[145px] shrink-0 items-center pl-3">
        <button aria-label="Inicio"><svg width="24" height="24" viewBox="0 0 24 24" fill="#fff"><path d="M0 3.500L10 2v9.500H0zM11 1.800L24 0v11.500H11zM0 12.500h10V22L0 20.500zM11 12.500h13V24l-13-1.800z" /></svg></button>
        <button aria-label="Cortana" className="ml-[28px]"><svg width="16" height="16" fill="none" stroke="#fff" strokeWidth="2"><circle cx="8" cy="8" r="6.800" /></svg></button>
        <button aria-label="Vista de tareas" className="ml-[25px]"><svg width="30" height="20" fill="none" stroke="#fff" strokeWidth="1.200"><path d="M6.500.7h17v18.600h-17zM4 3.500H.7v13H4M26 3.500h3.300v13H26" /></svg></button>
      </div>
      <div className="relative flex flex-1 flex-col">
        <div className="flex h-10">
          <Launcher name="Internet Explorer" icon={<IeIcon />} className="w-[59px]" />
          <Task icon={<ChromeIcon />} label="Trust.com - Rató..." className="w-[155px] gap-[5px] bg-[#333]/90 pl-[11px]" />
          <Task icon={<ChromeIcon />} label="Mini Keyboard R..." className="ml-1 w-[146px] gap-1 pl-[7px]" />
          <Launcher name="Edge" icon={<EdgeIcon />} className="w-[66px]" />
          <Task icon={<PcIcon />} label="Este equipo" className="w-[146px] gap-[5px] pl-[7px]" />
          <Task icon={<span className="mt-3"><DriveIcon /></span>} label="My Book (T:)" className="ml-2 w-[147px] gap-[6px] pl-2" />
          <Task icon={<FolderIcon />} label="carolinarubio" className="ml-2 w-[146px] gap-[13px] pl-[11px]" />
          <Launcher name="Teclado en pantalla" icon={<KeyboardMonitor />} className="ml-1 w-14" />
          <Launcher name="Tienda" icon={<StoreIcon />} className="w-14" />
          <Launcher name="Monitor" icon={<MonitorIcon />} className="w-14" />
          <Launcher name="Panel de control" icon={<ControlPanel />} className="w-14" />
          <Launcher name="VLC" icon={<VlcIcon />} className="w-14" />
          <Launcher name="Descargador" icon={<DownloaderIcon />} className="w-14" />
          <Launcher name="Skype" icon={<SkypeIcon />} className="w-14" />
        </div>
        <div className="mt-px flex h-10">
          <Launcher name="Sonido" icon={<SpeakerIcon />} className="w-[59px]" />
          <Launcher name="Google Earth" icon={<EarthIcon />} className="w-[57px]" />
          <Launcher name="Periféricos" icon={<TealIcon />} className="w-14" />
          <Launcher name="Lector" icon={<RedHead />} className="w-[57px]" />
          <Launcher name="eMule" icon={<DonkeyIcon />} className="w-[57px]" />
          <Launcher name="Bomba" icon={<BombIcon />} className="w-[57px]" />
          <Launcher name="VirtualBox" icon={<VboxIcon />} className="w-[54px]" />
          <Task icon={<SettingsGear />} label="Configuración" className="ml-2 w-[152px] gap-2 pl-[10px]" />
        </div>
      </div>
      <div className="relative flex shrink-0 items-stretch">
        <button aria-label="Iconos ocultos" className="flex w-[22px] items-center"><svg width="12" height="8" fill="none" stroke="#fff" strokeWidth="1.400"><path d="M.5 7L6 1.500 11.500 7" /></svg></button>
        <div className="mr-[6px] flex w-[17px] flex-col justify-between py-[13px]">
          <svg width="17" height="14" fill="none" stroke="#fff"><path d="M5.500 2.500h11v8H4.500V6M7 13.500h6M10.500 10.500v3M.5.5h4v4h-4zM2.500 4.500v6h2" /></svg>
          <svg width="16" height="14" fill="none" stroke="#fff" strokeWidth="1.100"><path d="M.5 4.500h2.500L6 1.500v11L3 9.500H.5zM8 5q1.500 2 0 4M10.500 3q3 4 0 8" /><path d="M13 1q4.500 6 0 12" stroke="#777" /></svg>
        </div>
        <div className="flex w-[65px] flex-col items-center justify-center pt-px text-center leading-[22px]">
          <time>19:22</time><span>lunes</span><time>03/04/2017</time>
        </div>
        <button aria-label="Notificaciones" className="flex w-[51px] items-center justify-center pr-[6px]"><svg width="16" height="17" fill="none" stroke="#fff" strokeWidth="1.200"><path d="M.6.6h14.800v11.500H10.500L8 15.500 5.500 12.100H.6z" /></svg></button>
        <div className="mr-1 w-px bg-[#555]" />
      </div>
    </footer>
  );
}

export default function App() {
  return (
    <div className="flex h-screen flex-col overflow-hidden bg-[#eee] font-['Open_Sans',sans-serif] text-[12px]">
      <TabStrip />
      <Toolbar />
      <BookmarksBar />
      <div className="flex min-h-0 flex-1">
        <div className="relative min-w-0 flex-1 overflow-hidden">
          <SiteHeader />
          <SupportPage />
          <SocialBar />
        </div>
        <Scrollbar />
      </div>
      <Taskbar />
    </div>
  );
}
